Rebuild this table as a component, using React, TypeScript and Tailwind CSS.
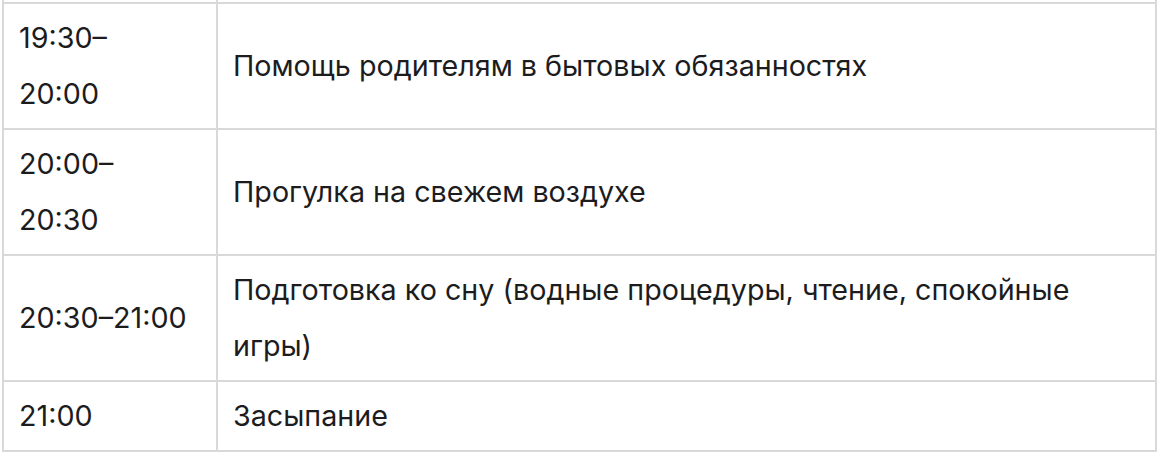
const ROWS: { time: string[]; text: string[] }[] = [
  { time: ["19:30–", "20:00"], text: ["Помощь родителям в бытовых обязанностях"] },
  { time: ["20:00–", "20:30"], text: ["Прогулка на свежем воздухе"] },
  {
    time: ["20:30–21:00"],
    text: ["Подготовка ко сну (водные процедуры, чтение, спокойные", "игры)"],
  },
  { time: ["21:00"], text: ["Засыпание"] },
];

export default function App() {
  return (
    <div className="w-[1158px] h-[452px] bg-white pl-[2px] font-['Inter',sans-serif] text-[28.7px] leading-[56px] text-[#1c1c1e]">
      <div className="w-[1155px] border-x-2 border-b-2 border-[#d9d9d9]">
        {/* tail of the row above, cut off by the crop */}
        <div className="grid grid-cols-[214px_1fr] h-[2px]">
          <div className="border-r-2 border-[#d9d9d9]" />
          <div />
        </div>
        {ROWS.map((r, i) => (
          <div key={i} className="grid grid-cols-[214px_1fr] border-t-2 border-[#d9d9d9]">
            <div className="flex flex-col justify-center border-r-2 border-[#d9d9d9] py-[6px] pl-[15px]">
              {r.time.map((t, j) => (
                <span key={j}>{t}</span>
              ))}
            </div>
            <div className="flex flex-col justify-center py-[6px] pl-[15px]">
              {r.text.map((t, j) => (
                <span key={j}>{t}</span>
              ))}
            </div>
          </div>
        ))}
      </div>
    </div>
  );
}
